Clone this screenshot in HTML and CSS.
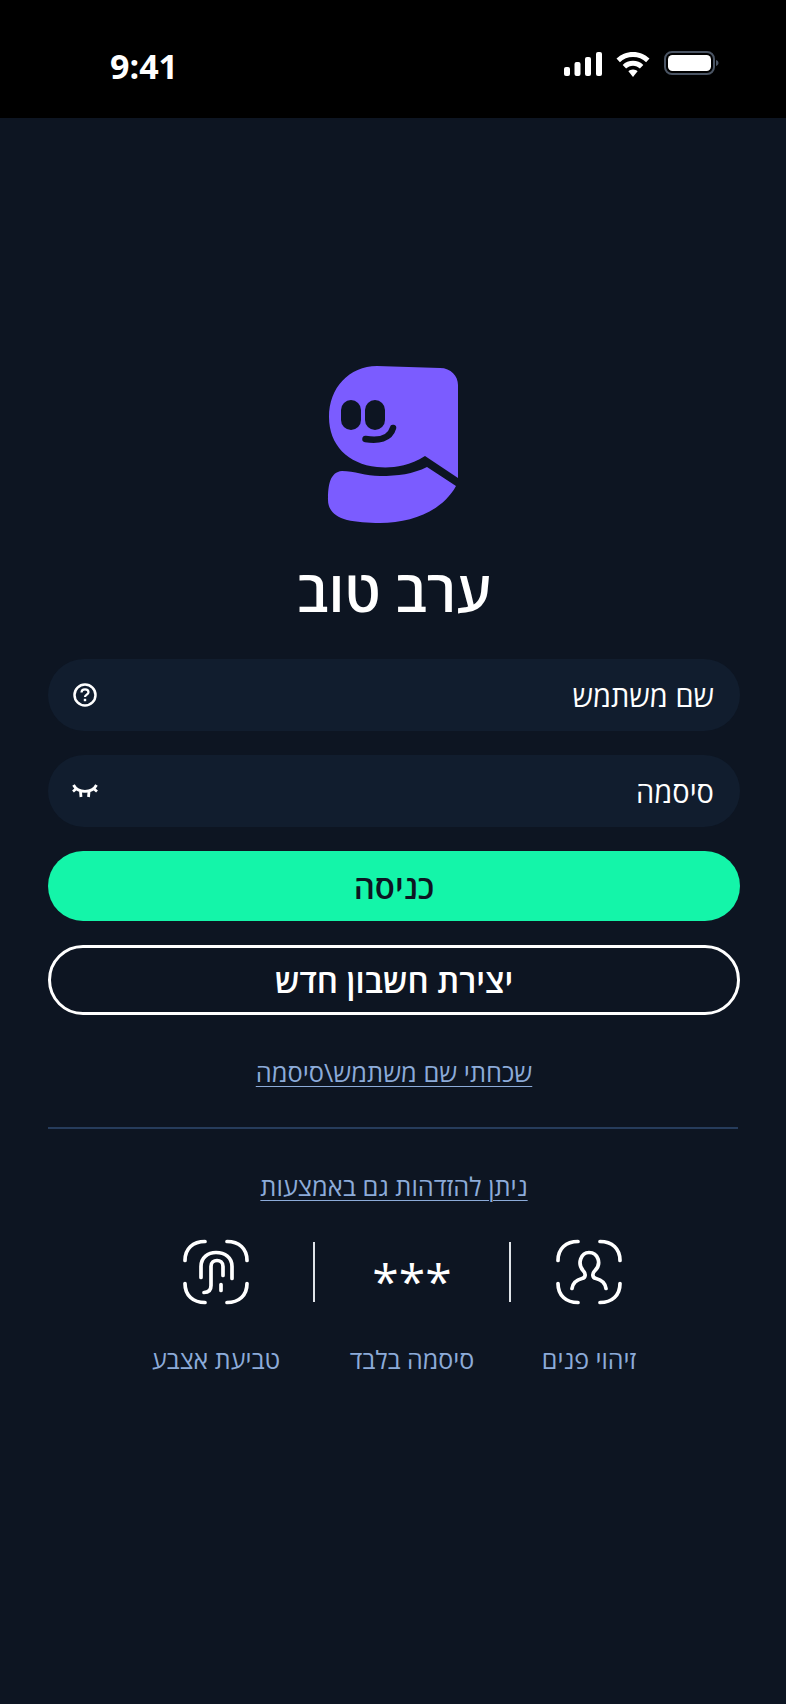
FILE: index.html
```html
<!DOCTYPE html>
<html lang="he" dir="rtl">
<head>
<meta charset="utf-8">
<title>כניסה</title>
<link rel="stylesheet" href="styles.css">
</head>
<body>
<header class="status" dir="ltr">
  <span class="time">9:41</span>
  <div class="status-icons">
    <svg class="ic-signal" width="38" height="24" viewBox="0 0 38 24"><rect x="0" y="15" width="6" height="9" rx="2"/><rect x="10.500" y="10" width="6" height="14" rx="2"/><rect x="21" y="5" width="6" height="19" rx="2"/><rect x="32" y="0" width="6" height="24" rx="2"/></svg>
    <svg class="ic-wifi" width="34" height="25" viewBox="0 0 34 25"><path d="M17 0C10.500 0 4.800 2.500 0.500 6.600L3.900 10.200C7.300 6.900 11.900 5 17 5s9.700 1.900 13.100 5.200l3.400-3.600C29.200 2.500 23.500 0 17 0z"/><path d="M17 8.800c-4 0-7.600 1.500-10.300 4.100l3.400 3.600c1.800-1.700 4.300-2.800 6.900-2.800s5.100 1.100 6.900 2.800l3.400-3.600C24.600 10.300 21 8.800 17 8.800z"/><path d="M17 17.500c-2 0-3.500.7-4.600 1.800L17 25l4.600-5.700c-1.100-1.100-2.600-1.800-4.600-1.800z"/></svg>
    <svg class="ic-batt" width="55" height="24" viewBox="0 0 55 24"><rect x="1" y="1" width="49" height="22" rx="7" fill="none" stroke="#4a5463" stroke-width="2"/><rect x="4" y="4" width="43" height="16" rx="4.500" fill="#fff"/><path d="M52 9v6c1.500-.4 2.500-1.600 2.500-3s-1-2.600-2.500-3z" fill="#4a5463"/></svg>
  </div>
</header>
<main class="page">
  <svg class="logo" width="134" height="162" viewBox="26 14 134 162">
    <path class="logo-fill" d="M77 16L140 18C151 18 158 26 158 35V128L125 106C106 118 88 118 77 117C48 114 29 95 29 67C29 38 49 16 77 16Z"/>
    <path class="logo-fill" d="M42 121C54 121 66 126 80 126C98 126 113 124 127 117L156 136C143 160 113 173 80 173C68 173 56 172 47 170C35 167 28 160 28 150C28 135 30 122 42 121Z"/>
    <rect class="logo-cut" x="41" y="50" width="20" height="30" rx="10"/>
    <rect class="logo-cut" x="65" y="50" width="20" height="30" rx="10"/>
    <path class="logo-smile" d="M65.500 89C78 91 90 89 93 78"/>
  </svg>
  <h1 class="title">ערב טוב</h1>
  <div class="field">
    <span>שם משתמש</span>
    <svg class="field-icon" width="26" height="26" viewBox="0 0 26 26"><circle cx="13" cy="13" r="10.500" fill="none" stroke="#fff" stroke-width="2.500"/><path d="M9.500 10.500C9.500 8.500 11 7.300 13 7.300S16.500 8.500 16.500 10.300C16.500 12.500 13 12.700 13 15" fill="none" stroke="#fff" stroke-width="2.200"/><rect x="11.800" y="16.800" width="2.400" height="2.400" fill="#fff"/></svg>
  </div>
  <div class="field">
    <span>סיסמה</span>
    <svg class="field-icon" width="26" height="16" viewBox="0 0 26 16"><path d="M1.500 2C6 10.500 20 10.500 24.500 2" fill="none" stroke="#fff" stroke-width="2.800"/><path d="M4.500 5.500L1 8.500M8.500 8.500L9 14M17 8.500L16.500 14M21.500 5.500L25 8.500" fill="none" stroke="#fff" stroke-width="2.800"/></svg>
  </div>
  <button class="btn btn-primary" type="button">כניסה</button>
  <button class="btn btn-outline" type="button">יצירת חשבון חדש</button>
  <a class="link link-forgot" href="#">שכחתי שם משתמש\סיסמה</a>
  <hr class="divider">
  <a class="link link-alt" href="#">ניתן להזדהות גם באמצעות</a>
  <div class="methods">
    <div class="method-icon">
      <svg class="auth-svg" width="100" height="100" viewBox="-1 2.500 100 100"><path d="M18 41C18 29 26 22 38 22M60 22C72 22 80 29 80 41M18 64C18 76 26 83 38 83M60 83C72 83 80 76 80 64"/><path d="M32 69C33 62 38 60 42 59C46 58 46 54 43 51C37 44 41 33 49 33C58 33 62 44 55 51C52 54 52 58 56 59C60 60 65 62 66 69"/></svg>
    </div>
    <div class="method-icon method-mid"><span class="stars">***</span></div>
    <div class="method-icon">
      <svg class="auth-svg" width="100" height="100" viewBox="-4 2.500 100 100"><path d="M15 41C15 29 23 22 35 22M57 22C69 22 77 29 77 41M15 64C15 76 23 83 35 83M57 83C69 83 77 76 77 64"/><path d="M31 58V47C31 38 38 33 46 33C55 33 62 38 62 47V59"/><path d="M34 73C39 73 41 70 41 66V47C41 43 44 41 47 41C50 41 53 43 53 47V56M51 65V71"/></svg>
    </div>
    <span class="method-label">זיהוי פנים</span>
    <span class="method-label">סיסמה בלבד</span>
    <span class="method-label">טביעת אצבע</span>
  </div>
</main>
</body>
</html>
```
FILE: styles.css
```css
* { box-sizing: border-box; }
html, body { margin: 0; padding: 0; }
body {
  width: 786px;
  height: 1704px;
  background: #0d1522;
  color: #fff;
  font-family: "Open Sans", "Noto Sans", sans-serif;
  overflow: hidden;
}
.status {
  height: 118px;
  background: #000;
  display: flex;
  justify-content: space-between;
  padding: 51px 67px 0 110px;
}
.time {
  font-size: 34px;
  font-weight: 700;
  line-height: 30px;
}
.status-icons { display: flex; gap: 14px; align-items: flex-start; }
.status-icons svg { fill: #fff; display: block; }
.ic-signal, .ic-wifi { margin-top: 1px; }
.page {
  display: flex;
  flex-direction: column;
  align-items: center;
  padding: 246px 46px 0 48px;
}
.logo { display: block; margin-right: 3px; }
.logo-fill { fill: #7b5cff; }
.logo-cut { fill: #0d1522; }
.logo-smile { fill: none; stroke: #0d1522; stroke-width: 6.500; stroke-linecap: round; }
.title {
  margin: 29px 0 0;
  font-size: 57px;
  font-weight: 600;
  line-height: 70px;
}
.field {
  width: 692px;
  height: 72px;
  margin-bottom: 24px;
  border-radius: 36px;
  background: #111d2e;
  display: flex;
  align-items: center;
  justify-content: space-between;
  padding: 0 26px 0 24px;
  font-size: 29px;
  font-weight: 500;
}
.title + .field { margin-top: 34px; }
.field-icon { display: block; }
.btn {
  width: 692px;
  height: 70px;
  border-radius: 35px;
  font: 600 33px "Open Sans", "Noto Sans", sans-serif;
  padding: 0;
}
.btn-primary { background: #14f5a9; color: #0d1522; border: 0; }
.btn-outline { background: transparent; color: #fff; border: 3px solid #fff; margin-top: 24px; }
.link {
  color: #8cabd9;
  font-size: 25.400px;
  line-height: 32px;
  text-decoration: underline;
  text-underline-offset: 4px;
  text-decoration-thickness: 1px;
}
.link-forgot { margin-top: 41px; }
.divider {
  width: 690px;
  height: 2px;
  margin: 39px 0 0;
  align-self: flex-end;
  border: 0;
  background: #263c5c;
}
.link-alt { margin-top: 41px; }
.methods {
  width: 786px;
  margin: 40px -46px 0 -48px;
  padding: 0 119px;
  display: grid;
  grid-template-columns: 156px 198px 194px;
  grid-template-rows: 60px auto;
  row-gap: 41px;
}
.method-icon {
  height: 60px;
  display: flex;
  align-items: center;
  justify-content: center;
}
.method-mid { border-inline: 2px solid #dfe3e8; }
.auth-svg {
  flex: none;
  fill: none;
  stroke: #fff;
  stroke-width: 3.700;
  stroke-linecap: round;
  stroke-linejoin: round;
}
.stars {
  font-family: "Open Sans", sans-serif;
  font-size: 48px;
  line-height: 60px;
  padding-top: 18px;
}
.method-label {
  text-align: center;
  color: #8cabd9;
  font-size: 25px;
  line-height: 32px;
}
```
